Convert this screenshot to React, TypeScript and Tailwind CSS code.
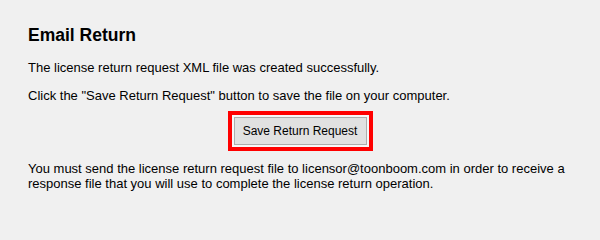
export default function App() {
  return (
    <main className="min-h-screen bg-[#f0f0f0] px-7 pt-[25px] font-['Liberation_Sans',Arial,sans-serif] text-black">
      <h1 className="text-[17.5px] font-bold leading-[20px]">Email Return</h1>

      <p className="mt-[15px] text-[13px] leading-[15px]">
        The license return request XML file was created successfully.
      </p>
      <p className="mt-[13px] text-[13px] leading-[15px]">
        Click the "Save Return Request" button to save the file on your computer.
      </p>

      <div className="mt-[8px] flex justify-center">
        <div className="border-[4px] border-[#ff0000] bg-[#f7f7f7] p-[2px]">
          <button className="flex h-[28px] w-[133px] items-center justify-center border border-[#adadad] bg-[#e1e1e1] text-[12px] text-black">
            Save Return Request
          </button>
        </div>
      </div>

      <p className="mt-[10px] text-[13px] leading-[15px]">
        You must send the license return request file to licensor@toonboom.com in order to receive a response file that you will use to complete the license return operation.
      </p>
    </main>
  );
}
